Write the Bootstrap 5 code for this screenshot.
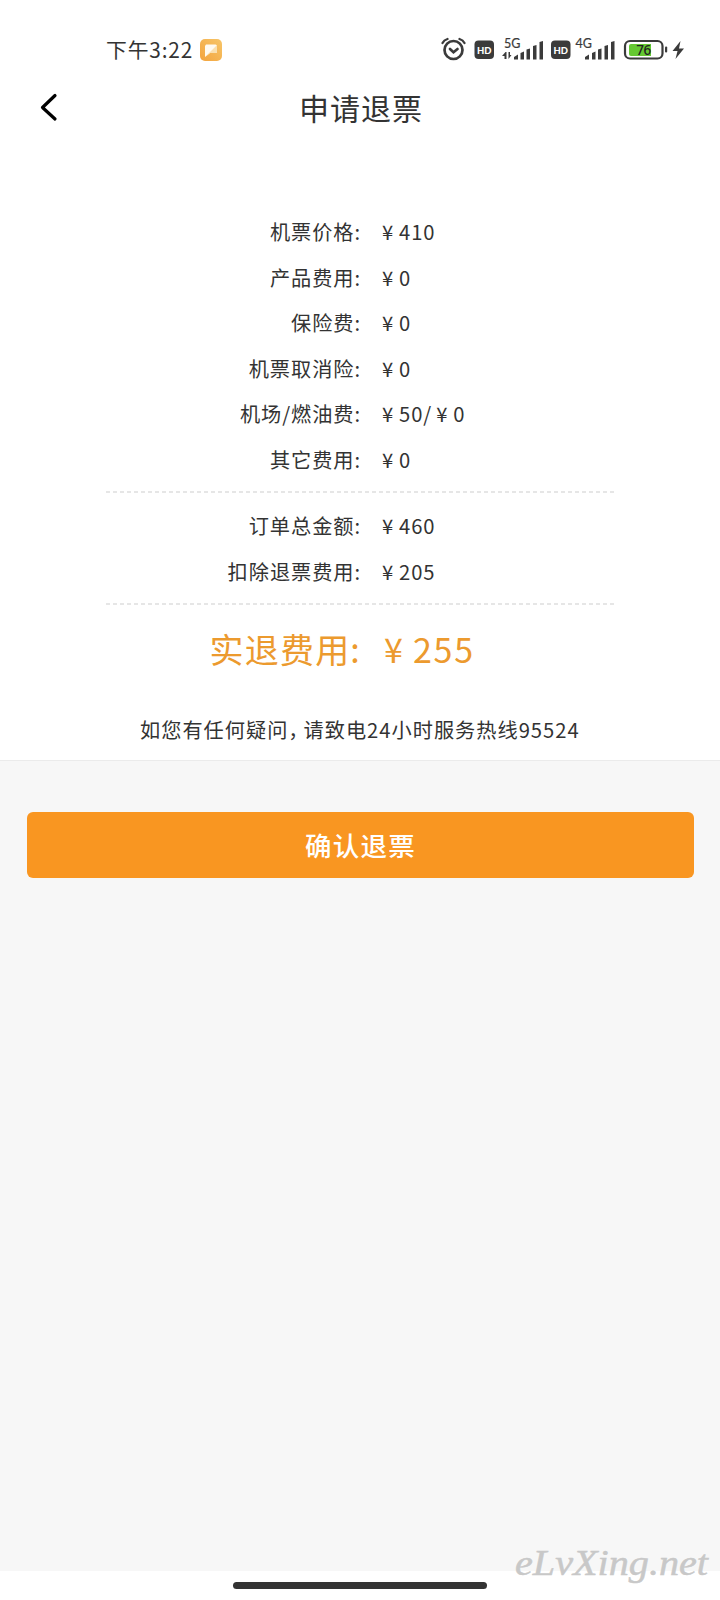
<!DOCTYPE html>
<html lang="zh-CN">
<head>
<meta charset="utf-8">
<meta name="viewport" content="width=device-width, initial-scale=1">
<title>申请退票</title>
<link href="https://cdn.jsdelivr.net/npm/bootstrap@5.3.0/dist/css/bootstrap.min.css" rel="stylesheet">
<style>
  body { font-family: "Noto Sans CJK SC", sans-serif; color: #333; background: #fff; width: 720px; height: 1600px; overflow: hidden; }
  .status-bar { height: 76px; padding: 24px 0 0 106px; }
  .clock { font-size: 20.8px; line-height: 50px; letter-spacing: .85px; width: 94px; white-space: nowrap; }
  .title-bar { height: 133px; padding-left: 39px; }
  .page-title { font-size: 30px; line-height: 63px; letter-spacing: 1px; margin-left: 240px; font-weight: 400; }
  .fees { font-size: 20.2px; letter-spacing: .95px; line-height: 45.5px; }
  .fee-row { height: 45.5px; }
  .fee-label { width: 361px; text-align: right; }
  .fee-value { padding-left: 21px; }
  .yen { display: inline-block; width: 17px; }
  .dashes { height: 2px; margin: 0 106px; background: repeating-linear-gradient(90deg, #e6e6e6 0 4px, transparent 4px 7px); }
  .refund { color: #ec9a2e; font-size: 34px; letter-spacing: 1.2px; line-height: 87px; height: 86px; }
  .refund .fee-label { width: 361px; }
  .refund .fee-value { padding-left: 23px; }
  .refund .yen { width: 29px; }
  .refund .amount { letter-spacing: 1.7px; }
  .hotline { font-size: 20.2px; letter-spacing: 1px; line-height: 77px; height: 69px; padding-left: 140px; white-space: nowrap; }
  .comma { letter-spacing: -5px; }
  .action-area { height: 811px; background: #f7f7f7; border-top: 1px solid #ebebeb; padding: 51px 26.5px 0; }
  .btn-refund { --bs-btn-bg: #f99621; --bs-btn-color: #fff; --bs-btn-hover-bg: #e98816; --bs-btn-hover-color: #fff; height: 66px; border: 0; border-radius: 6px; font-size: 26.5px; font-weight: 500; letter-spacing: 1.3px; line-height: 66px; padding: 0 0 0 1px; }
  .home-bar { width: 254px; height: 7px; border-radius: 4px; background: #333; margin-top: 11px; }
  .watermark { position: absolute; left: 514px; top: 1538px; }
</style>
</head>
<body class="position-relative">
<header>
  <div class="status-bar d-flex">
    <span class="clock">下午3:22</span>
    <svg class="flex-shrink-0" width="22" height="52" viewBox="0 24 22 52">
      <defs><linearGradient id="g" x2="1" y1="1" y2="0"><stop stop-color="#f3a43e"/><stop offset="1" stop-color="#f7c568"/></linearGradient></defs>
      <rect y="39" width="22" height="22" rx="5" fill="url(#g)"/>
      <path d="M6 44.500h9.500a1.500 1.500 0 0 1 1.500 1.500v5.500a1.500 1.500 0 0 1-1.500 1.500H10l-5 4V46z" fill="#fffaf0"/>
      <path d="M5 57L17 45v6.500a1.500 1.500 0 0 1-1.500 1.500H10z" fill="#fae0b0"/>
    </svg>
    <svg class="flex-shrink-0" style="margin-left:208px" width="260" height="52" viewBox="430 24 260 52" fill="#3b3b3b" font-family="Lato, sans-serif">
      <g fill="none" stroke="#3b3b3b" stroke-width="2.700" stroke-linecap="round">
        <circle cx="453.500" cy="50" r="9"/><path d="M450 49l3.500 3.200 4-3.200"/>
        <path d="M442.500 43q1.500-3 5-4M464.500 43q-1.500-3-5-4" stroke-width="2.300"/>
      </g>
      <rect x="474.500" y="40.500" width="19.500" height="18.500" rx="4"/>
      <text x="484.300" y="53.500" font-size="10" font-weight="900" text-anchor="middle" fill="#fff" textLength="14.500" lengthAdjust="spacingAndGlyphs">HD</text>
      <text x="504" y="47.800" font-size="12.500" stroke="#3b3b3b" stroke-width=".2" textLength="16.500">5G</text>
      <path d="M505.500 52l-3.500 4h2.500v3h2v-7zM508.500 52v7l3-4h-1.500v-3z"/>
      <path d="M514 59.500V57l4-2.500v5zM520.500 53l3.500-1.500v8h-3.500zM526.500 49.500l3.500-1v11h-3.500zM533 46l3.500-1v14.500H533zM539.500 42l3.500-1v18.500h-3.500z"/>
      <rect x="551" y="40.500" width="19.500" height="18.500" rx="4"/>
      <text x="560.800" y="53.500" font-size="10" font-weight="900" text-anchor="middle" fill="#fff" textLength="14.500" lengthAdjust="spacingAndGlyphs">HD</text>
      <text x="575.500" y="47.800" font-size="12.500" stroke="#3b3b3b" stroke-width=".2" textLength="16.500">4G</text>
      <path d="M585 59.500V57l4-2.500v5zM592 53l3.500-1.500v8H592zM598 49.500l3.500-1v11H598zM604.500 46l3.500-1v14.500h-3.500zM611 42l3.500-1v18.500H611z"/>
      <rect x="625" y="41" width="37.500" height="17.500" rx="5" fill="#fff" stroke="#3b3b3b" stroke-width="2.200"/>
      <path d="M631 44h20v12h-20a2 2 0 0 1-2-2v-8a2 2 0 0 1 2-2z" fill="#65c832"/>
      <rect x="665" y="46.500" width="2.200" height="6" rx="1"/>
      <text x="643.700" y="54.700" font-size="13.500" font-weight="500" font-family="Noto Sans" text-anchor="middle" fill="#222" textLength="15">76</text>
      <path d="M680.500 41l-8 10h5l-2 8 8.500-10.500h-5z"/>
    </svg>
  </div>
  <div class="title-bar d-flex">
    <svg class="flex-shrink-0" width="20" height="64" viewBox="39 76 20 64" fill="none" stroke="#000" stroke-width="3.200" stroke-linecap="round" stroke-linejoin="round"><path d="M55 95.500L42.500 107.500 55 119"/></svg>
    <h1 class="page-title mb-0">申请退票</h1>
  </div>
</header>
<main>
  <section class="fees">
    <div class="fee-row d-flex"><div class="fee-label">机票价格:</div><div class="fee-value"><span class="yen">¥</span>410</div></div>
    <div class="fee-row d-flex"><div class="fee-label">产品费用:</div><div class="fee-value"><span class="yen">¥</span>0</div></div>
    <div class="fee-row d-flex"><div class="fee-label">保险费:</div><div class="fee-value"><span class="yen">¥</span>0</div></div>
    <div class="fee-row d-flex"><div class="fee-label">机票取消险:</div><div class="fee-value"><span class="yen">¥</span>0</div></div>
    <div class="fee-row d-flex"><div class="fee-label">机场/燃油费:</div><div class="fee-value"><span class="yen">¥</span>50/<span class="yen ms-1">¥</span>0</div></div>
    <div class="fee-row d-flex"><div class="fee-label">其它费用:</div><div class="fee-value"><span class="yen">¥</span>0</div></div>
    <div class="dashes" style="margin-top:9px;margin-bottom:10px"></div>
    <div class="fee-row d-flex"><div class="fee-label">订单总金额:</div><div class="fee-value"><span class="yen">¥</span>460</div></div>
    <div class="fee-row d-flex"><div class="fee-label">扣除退票费用:</div><div class="fee-value"><span class="yen">¥</span>205</div></div>
    <div class="dashes" style="margin-top:9px"></div>
  </section>
  <div class="refund d-flex"><div class="fee-label">实退费用:</div><div class="fee-value"><span class="yen">¥</span><span class="amount">255</span></div></div>
  <div class="hotline">如您有任何疑问<span class="comma">，</span>请致电24小时服务热线95524</div>
  <div class="action-area"><button type="button" class="btn btn-refund d-block w-100">确认退票</button></div>
</main>
<div class="home-bar mx-auto"></div>
<div class="watermark"><svg class="d-block" width="200" height="58" viewBox="514 1538 200 58"><text x="515" y="1575" font-family="'Liberation Serif', serif" font-style="italic" font-size="36" fill="#c8c8c8" stroke="#c8c8c8" stroke-width=".5" textLength="193" lengthAdjust="spacingAndGlyphs">eLvXing.net</text></svg></div>
<script src="https://cdn.jsdelivr.net/npm/bootstrap@5.3.0/dist/js/bootstrap.bundle.min.js"></script>
</body>
</html>
